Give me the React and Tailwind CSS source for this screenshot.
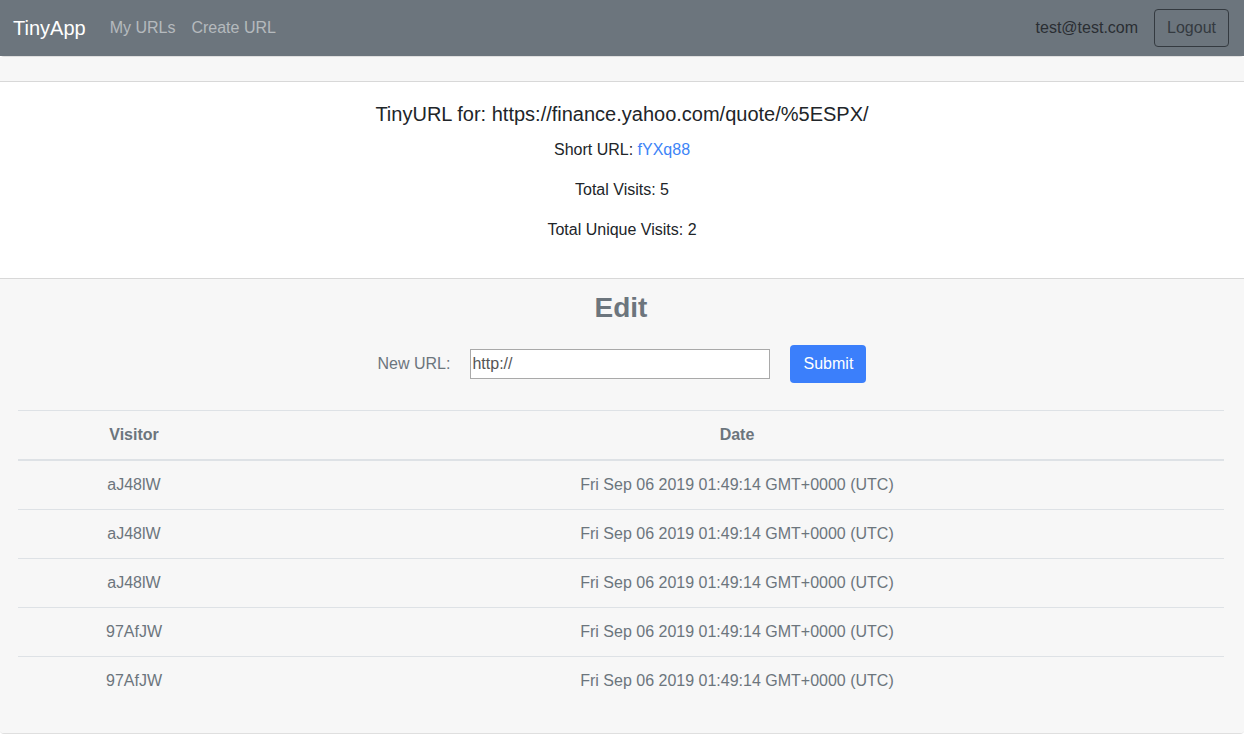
export default function App() {
  const rows = [
    ["aJ48lW", "Fri Sep 06 2019 01:49:14 GMT+0000 (UTC)"],
    ["aJ48lW", "Fri Sep 06 2019 01:49:14 GMT+0000 (UTC)"],
    ["aJ48lW", "Fri Sep 06 2019 01:49:14 GMT+0000 (UTC)"],
    ["97AfJW", "Fri Sep 06 2019 01:49:14 GMT+0000 (UTC)"],
    ["97AfJW", "Fri Sep 06 2019 01:49:14 GMT+0000 (UTC)"],
  ];
  return (
    <div className="min-h-[756px] bg-white text-[#212529] text-base leading-6" style={{ fontFamily: '"Liberation Sans", Arial, sans-serif' }}>
      <nav className="h-14 bg-[#6c757d] flex items-center pl-[13px] pr-[15px]">
        <span className="text-xl leading-[30px] text-white mr-4">TinyApp</span>
        <a className="px-2 text-white/50">My URLs</a>
        <a className="px-2 text-white/50">Create URL</a>
        <div className="ml-auto flex items-center">
          <span className="text-[#2a2e33]">test@test.com</span>
          <button className="ml-4 h-[38px] px-3 border border-[#343a40] rounded text-[#343a40]">Logout</button>
        </div>
      </nav>
      <div className="border-y border-black/[0.125] rounded-[4px]">
        <div className="h-[25px] bg-[#f7f7f7] border-b border-black/[0.125]"></div>
        <div className="p-5 text-center">
          <h5 className="text-xl leading-6 mb-3">TinyURL for: https://finance.yahoo.com/quote/%5ESPX/</h5>
          <p className="mb-4">Short URL: <a className="text-[#3d84f7]">fYXq88</a></p>
          <p className="mb-4">Total Visits: 5</p>
          <p className="mb-4">Total Unique Visits: 2</p>
        </div>
        <div className="bg-[#f7f7f7] border-t border-black/[0.125] pl-[18px] pr-[20px] pt-3 pb-3 text-[#6c757d] rounded-b-[4px]">
          <h3 className="text-[28px] leading-[34px] font-bold text-center mb-[20px]">Edit</h3>
          <div className="flex items-center justify-center mb-[27px] pl-[2px]">
            <label className="mr-[20px]">New URL:</label>
            <input className="w-[300px] h-[30px] border border-[#a9a9a9] bg-white px-[1px] text-base text-[#555]" defaultValue="http://" />
            <button className="ml-[20px] h-[38px] w-[76px] rounded bg-[#3b7ffb] text-white">Submit</button>
          </div>
          <table className="w-full mb-4 border-collapse">
            <thead>
              <tr>
                <th className="w-[232px] border-t border-[#dee2e6] border-b-2 py-3 font-bold text-center">Visitor</th>
                <th className="border-t border-[#dee2e6] border-b-2 py-3 font-bold text-center">Date</th>
              </tr>
            </thead>
            <tbody>
              {rows.map((r, i) => (
                <tr key={i}>
                  <td className={`py-3 text-center ${i > 0 ? "border-t border-[#dee2e6]" : ""}`}>{r[0]}</td>
                  <td className={`py-3 text-center ${i > 0 ? "border-t border-[#dee2e6]" : ""}`}>{r[1]}</td>
                </tr>
              ))}
            </tbody>
          </table>
        </div>
      </div>
    </div>
  );
}
